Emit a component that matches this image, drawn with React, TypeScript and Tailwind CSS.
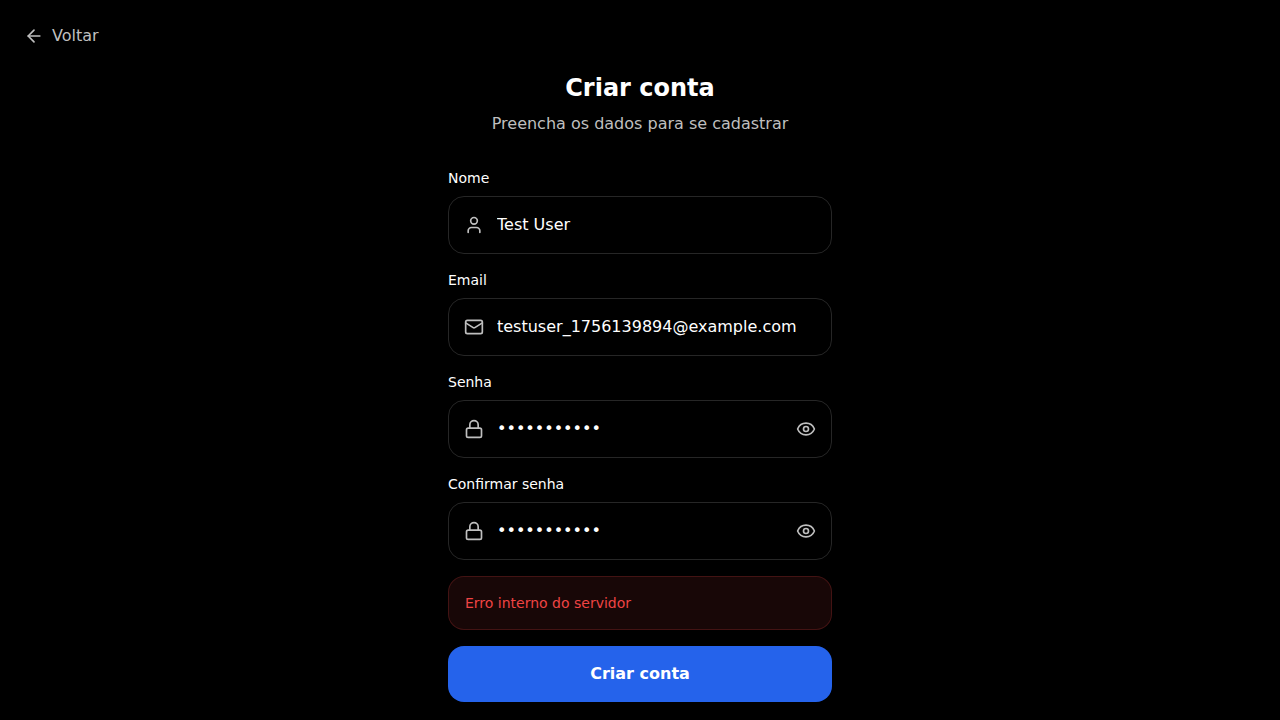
import { useState } from 'react';
import { ArrowLeft, Eye, EyeOff, Lock, Mail, User, type LucideIcon } from 'lucide-react';

type FieldProps = {
  id: string;
  label: string;
  type: 'text' | 'email' | 'password';
  icon: LucideIcon;
  initial: string;
};

function Field({ id, label, type, icon: Icon, initial }: FieldProps) {
  const [value, setValue] = useState(initial);
  const [visible, setVisible] = useState(false);
  const isPassword = type === 'password';

  return (
    <div>
      <label htmlFor={id} className="mb-2 block text-sm font-medium">
        {label}
      </label>
      <div className="relative">
        <Icon
          className="pointer-events-none absolute top-1/2 left-4 h-5 w-5 -translate-y-1/2 text-[#bfbfbf]"
          aria-hidden="true"
        />
        <input
          id={id}
          type={isPassword && visible ? 'text' : type}
          value={value}
          onChange={(e) => setValue(e.target.value)}
          className={`block w-full rounded-2xl border border-[#262626] bg-transparent py-4 pl-12 text-white outline-none focus:border-blue-600 ${
            isPassword ? 'pr-12' : 'pr-4'
          }`}
        />
        {isPassword && (
          <button
            type="button"
            aria-label={visible ? 'Ocultar senha' : 'Mostrar senha'}
            onClick={() => setVisible(!visible)}
            className="absolute top-1/2 right-4 -translate-y-1/2 text-[#bfbfbf]"
          >
            {visible ? <EyeOff className="h-5 w-5" /> : <Eye className="h-5 w-5" />}
          </button>
        )}
      </div>
    </div>
  );
}

export default function App() {
  return (
    <div className="flex min-h-screen flex-col bg-black font-['DejaVu_Sans',sans-serif] text-white">
      <header className="flex px-6 pt-6">
        <a href="#" className="flex items-center gap-2 text-[#bfbfbf]">
          <ArrowLeft className="h-5 w-5" aria-hidden="true" />
          Voltar
        </a>
      </header>
      <main className="mx-auto w-full max-w-md px-8 pt-6 pb-4">
        <div className="mb-8 text-center">
          <h1 className="mb-2 text-2xl font-bold">Criar conta</h1>
          <p className="text-[#bfbfbf]">Preencha os dados para se cadastrar</p>
        </div>
        <form className="flex flex-col gap-4" onSubmit={(e) => e.preventDefault()}>
          <Field id="name" label="Nome" type="text" icon={User} initial="Test User" />
          <Field id="email" label="Email" type="email" icon={Mail} initial="testuser_1756139894@example.com" />
          <Field id="password" label="Senha" type="password" icon={Lock} initial="password123" />
          <Field id="confirm" label="Confirmar senha" type="password" icon={Lock} initial="password123" />
          <div
            role="alert"
            className="rounded-2xl border border-[#ef4444]/20 bg-[#ef4444]/10 p-4 text-sm text-[#ef4444]"
          >
            Erro interno do servidor
          </div>
          <button type="submit" className="rounded-2xl bg-[#2563eb] py-4 font-semibold text-white">
            Criar conta
          </button>
        </form>
      </main>
    </div>
  );
}
